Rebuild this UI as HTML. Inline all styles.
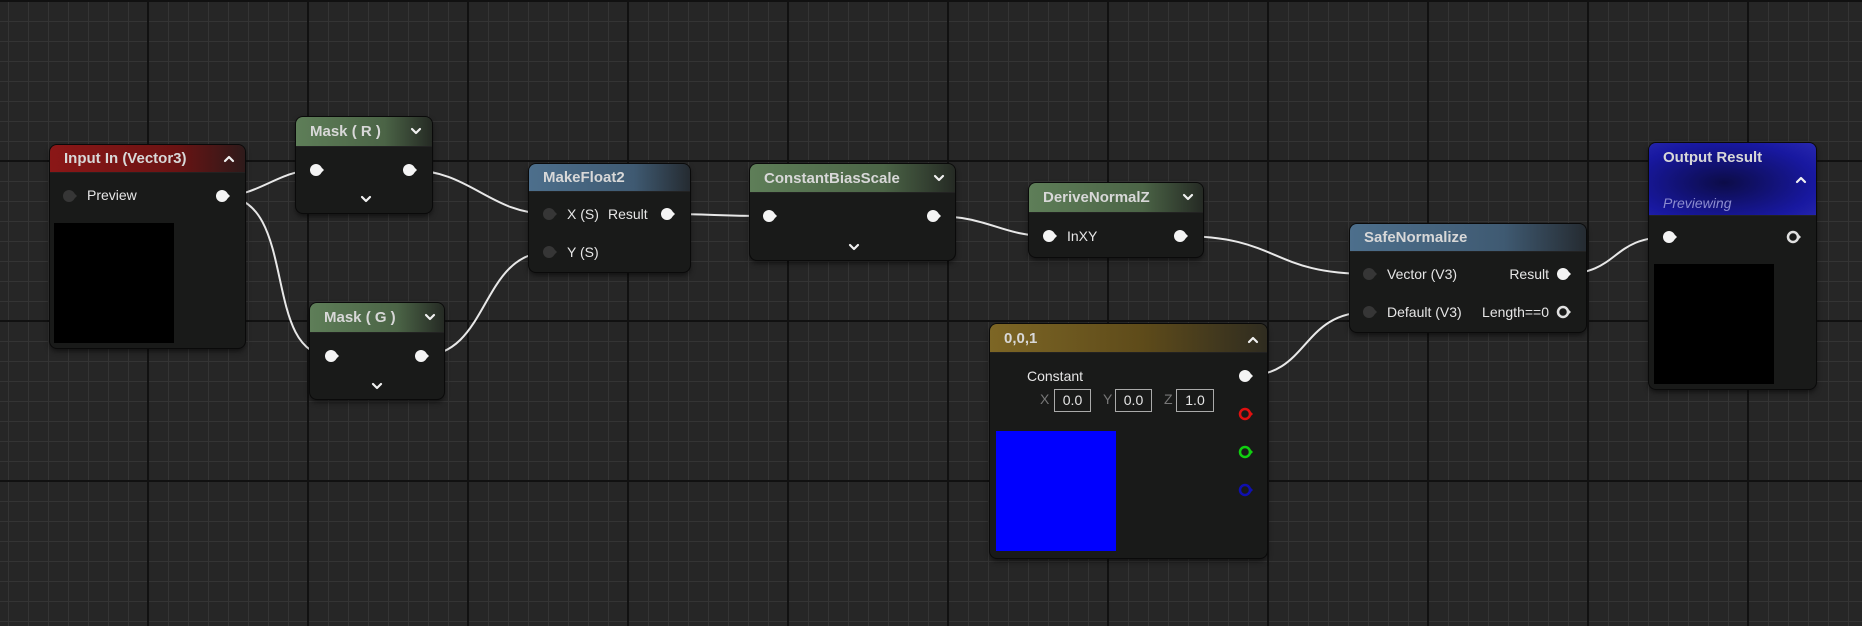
<!DOCTYPE html>
<html><head><meta charset="utf-8"><style>
*{margin:0;padding:0;box-sizing:border-box}
body{width:1862px;height:626px;overflow:hidden;position:relative;font-family:"Liberation Sans",sans-serif;
background-color:#262626;
background-image:
linear-gradient(to right,#111 2px,transparent 2px),
linear-gradient(to bottom,#111 2px,transparent 2px),
linear-gradient(to right,#343434 1px,transparent 1px),
linear-gradient(to bottom,#343434 1px,transparent 1px);
background-size:160px 160px,160px 160px,20px 20px,20px 20px;
background-position:147px 0px,0 160px,8px 0,0 1px;}
.n{position:absolute;background:#191a19;border-radius:7px;box-shadow:0 0 0 1px #0a0a0a,0 3px 6px rgba(0,0,0,.6);overflow:hidden}
.h{position:absolute;left:0;top:0;right:0;color:#d8d8d8;font-size:15px;font-weight:bold;padding-left:14px;border-bottom:1px solid #222}
.t{position:absolute;color:#e6e6e6;font-size:14px;white-space:nowrap}
svg.w{position:absolute;left:0;top:0}
</style></head><body>
<svg class="w" width="1862" height="626">
<g fill="none" stroke="#e8e8e8" stroke-width="2">
<path d="M222 196 C260 196 278 170 316 170"/>
<path d="M222 196 C300 196 260 356 331 356"/>
<path d="M409 170 C470 170 490 214 549 214"/>
<path d="M421 356 C490 356 480 252 549 252"/>
<path d="M667 214 C710 214 720 216 769 216"/>
<path d="M933 216 C990 216 1000 236 1049 236"/>
<path d="M1180 236 C1280 236 1270 274 1369 274"/>
<path d="M1245 376 C1310 376 1300 312 1369 312"/>
<path d="M1563 274 C1620 274 1610 237 1669 237"/>
</g></svg>

<!-- Input -->
<div class="n" style="left:50px;top:145px;width:195px;height:203px">
<div class="h" style="height:28px;line-height:28px;background:linear-gradient(90deg,#8b1717,#6a1313 65%,#2e1a1a)">Input In (Vector3)</div>
<div class="t" style="left:37px;top:42px">Preview</div>
<div style="position:absolute;left:4px;top:78px;width:120px;height:120px;background:#000"></div>
</div>
<!-- Mask R -->
<div class="n" style="left:296px;top:117px;width:136px;height:96px">
<div class="h" style="height:30px;line-height:30px;background:linear-gradient(90deg,#5e7e58,#4b6446 65%,#252a24)">Mask ( R )</div>
</div>
<!-- Mask G -->
<div class="n" style="left:310px;top:303px;width:134px;height:96px">
<div class="h" style="height:30px;line-height:30px;background:linear-gradient(90deg,#5e7e58,#4b6446 65%,#252a24)">Mask ( G )</div>
</div>
<!-- MakeFloat2 -->
<div class="n" style="left:529px;top:164px;width:161px;height:108px">
<div class="h" style="height:28px;line-height:28px;background:linear-gradient(90deg,#4d6f8c,#3f5a72 65%,#252b31)">MakeFloat2</div>
<div class="t" style="left:38px;top:42px">X (S)</div>
<div class="t" style="left:79px;top:42px">Result</div>
<div class="t" style="left:38px;top:80px">Y (S)</div>
</div>
<!-- ConstantBiasScale -->
<div class="n" style="left:750px;top:164px;width:205px;height:96px">
<div class="h" style="height:29px;line-height:29px;background:linear-gradient(90deg,#5e7e58,#4b6446 65%,#252a24)">ConstantBiasScale</div>
</div>
<!-- DeriveNormalZ -->
<div class="n" style="left:1029px;top:183px;width:174px;height:74px">
<div class="h" style="height:30px;line-height:30px;background:linear-gradient(90deg,#5e7e58,#4b6446 65%,#252a24)">DeriveNormalZ</div>
<div class="t" style="left:38px;top:45px">InXY</div>
</div>
<!-- 0,0,1 -->
<div class="n" style="left:990px;top:324px;width:277px;height:234px">
<div class="h" style="height:29px;line-height:29px;background:linear-gradient(90deg,#7d6625,#5e4b1a 55%,#2f2c20)">0,0,1</div>
<div class="t" style="left:37px;top:44px">Constant</div>
<div class="t" style="left:50px;top:67px;color:#777">X</div>
<div class="t" style="left:64px;top:65px;width:37px;height:23px;border:1px solid #aaa;text-align:center;line-height:21px">0.0</div>
<div class="t" style="left:113px;top:67px;color:#777">Y</div>
<div class="t" style="left:125px;top:65px;width:37px;height:23px;border:1px solid #aaa;text-align:center;line-height:21px">0.0</div>
<div class="t" style="left:174px;top:67px;color:#777">Z</div>
<div class="t" style="left:186px;top:65px;width:38px;height:23px;border:1px solid #aaa;text-align:center;line-height:21px">1.0</div>
<div style="position:absolute;left:6px;top:107px;width:120px;height:120px;background:#0000ff"></div>
</div>
<!-- SafeNormalize -->
<div class="n" style="left:1350px;top:224px;width:236px;height:108px">
<div class="h" style="height:28px;line-height:28px;background:linear-gradient(90deg,#4d6f8c,#3f5a72 65%,#252b31)">SafeNormalize</div>
<div class="t" style="left:37px;top:42px">Vector (V3)</div>
<div class="t" style="right:37px;top:42px">Result</div>
<div class="t" style="left:37px;top:80px">Default (V3)</div>
<div class="t" style="right:37px;top:80px">Length==0</div>
</div>
<!-- Output -->
<div class="n" style="left:1649px;top:143px;width:167px;height:246px">
<div class="h" style="height:73px;background:radial-gradient(ellipse at 45% 55%,#0c0c48,#1818a0 70%,#2828b0)">
<div style="position:absolute;left:14px;top:6px">Output Result</div>
<div style="position:absolute;left:14px;top:52px;font-weight:normal;font-style:italic;font-size:14px;color:#8c8cd0">Previewing</div>
</div>
<div style="position:absolute;left:5px;top:121px;width:120px;height:120px;background:#000"></div>
</div>

<svg class="w" width="1862" height="626">
<defs>
<g id="pw"><circle r="6" fill="#f4f4f4"/><path d="M5 -3 L8 0 L5 3Z" fill="#f4f4f4"/></g>
<g id="pg"><circle r="6" fill="#363636"/><path d="M5 -3 L8 0 L5 3Z" fill="#363636"/></g>
</defs>
<g fill="none" stroke="#f0f0f0" stroke-width="2.2" stroke-linecap="round" stroke-linejoin="round">
<!-- down chevrons -->
<path d="M412 129 L416 133 L420 129"/><path d="M362 197 L366 201 L370 197"/>
<path d="M426 315 L430 319 L434 315"/><path d="M373 384 L377 388 L381 384"/>
<path d="M935 176 L939 180 L943 176"/><path d="M850 245 L854 249 L858 245"/>
<path d="M1184 195 L1188 199 L1192 195"/>
<!-- up chevrons -->
<path d="M225 161 L229 157 L233 161"/><path d="M1249 342 L1253 338 L1257 342"/>
<path d="M1797 182 L1801 178 L1805 182"/>
</g>
<use href="#pg" x="69" y="196"/>
<use href="#pw" x="222" y="196"/>
<use href="#pw" x="316" y="170"/><use href="#pw" x="409" y="170"/>
<use href="#pw" x="331" y="356"/><use href="#pw" x="421" y="356"/>
<use href="#pg" x="549" y="214"/><use href="#pg" x="549" y="252"/><use href="#pw" x="667" y="214"/>
<use href="#pw" x="769" y="216"/><use href="#pw" x="933" y="216"/>
<use href="#pw" x="1049" y="236"/><use href="#pw" x="1180" y="236"/>
<use href="#pw" x="1245" y="376"/>
<g fill="none" stroke-width="2.5">
<circle cx="1245" cy="414" r="5" stroke="#e01010"/><circle cx="1245" cy="452" r="5" stroke="#10d010"/><circle cx="1245" cy="490" r="5" stroke="#1010b0"/>
<circle cx="1563" cy="312" r="5" stroke="#e0e0e0"/><circle cx="1793" cy="237" r="5" stroke="#e0e0e0"/>
</g>
<path d="M1250 411 L1253 414 L1250 417Z" fill="#e01010"/><path d="M1250 449 L1253 452 L1250 455Z" fill="#10d010"/><path d="M1250 487 L1253 490 L1250 493Z" fill="#1010b0"/>
<path d="M1568 309 L1571 312 L1568 315Z" fill="#e0e0e0"/><path d="M1798 234 L1801 237 L1798 240Z" fill="#e0e0e0"/>
<use href="#pg" x="1369" y="274"/><use href="#pg" x="1369" y="312"/><use href="#pw" x="1563" y="274"/>
<use href="#pw" x="1669" y="237"/>
</svg>
</body></html>
